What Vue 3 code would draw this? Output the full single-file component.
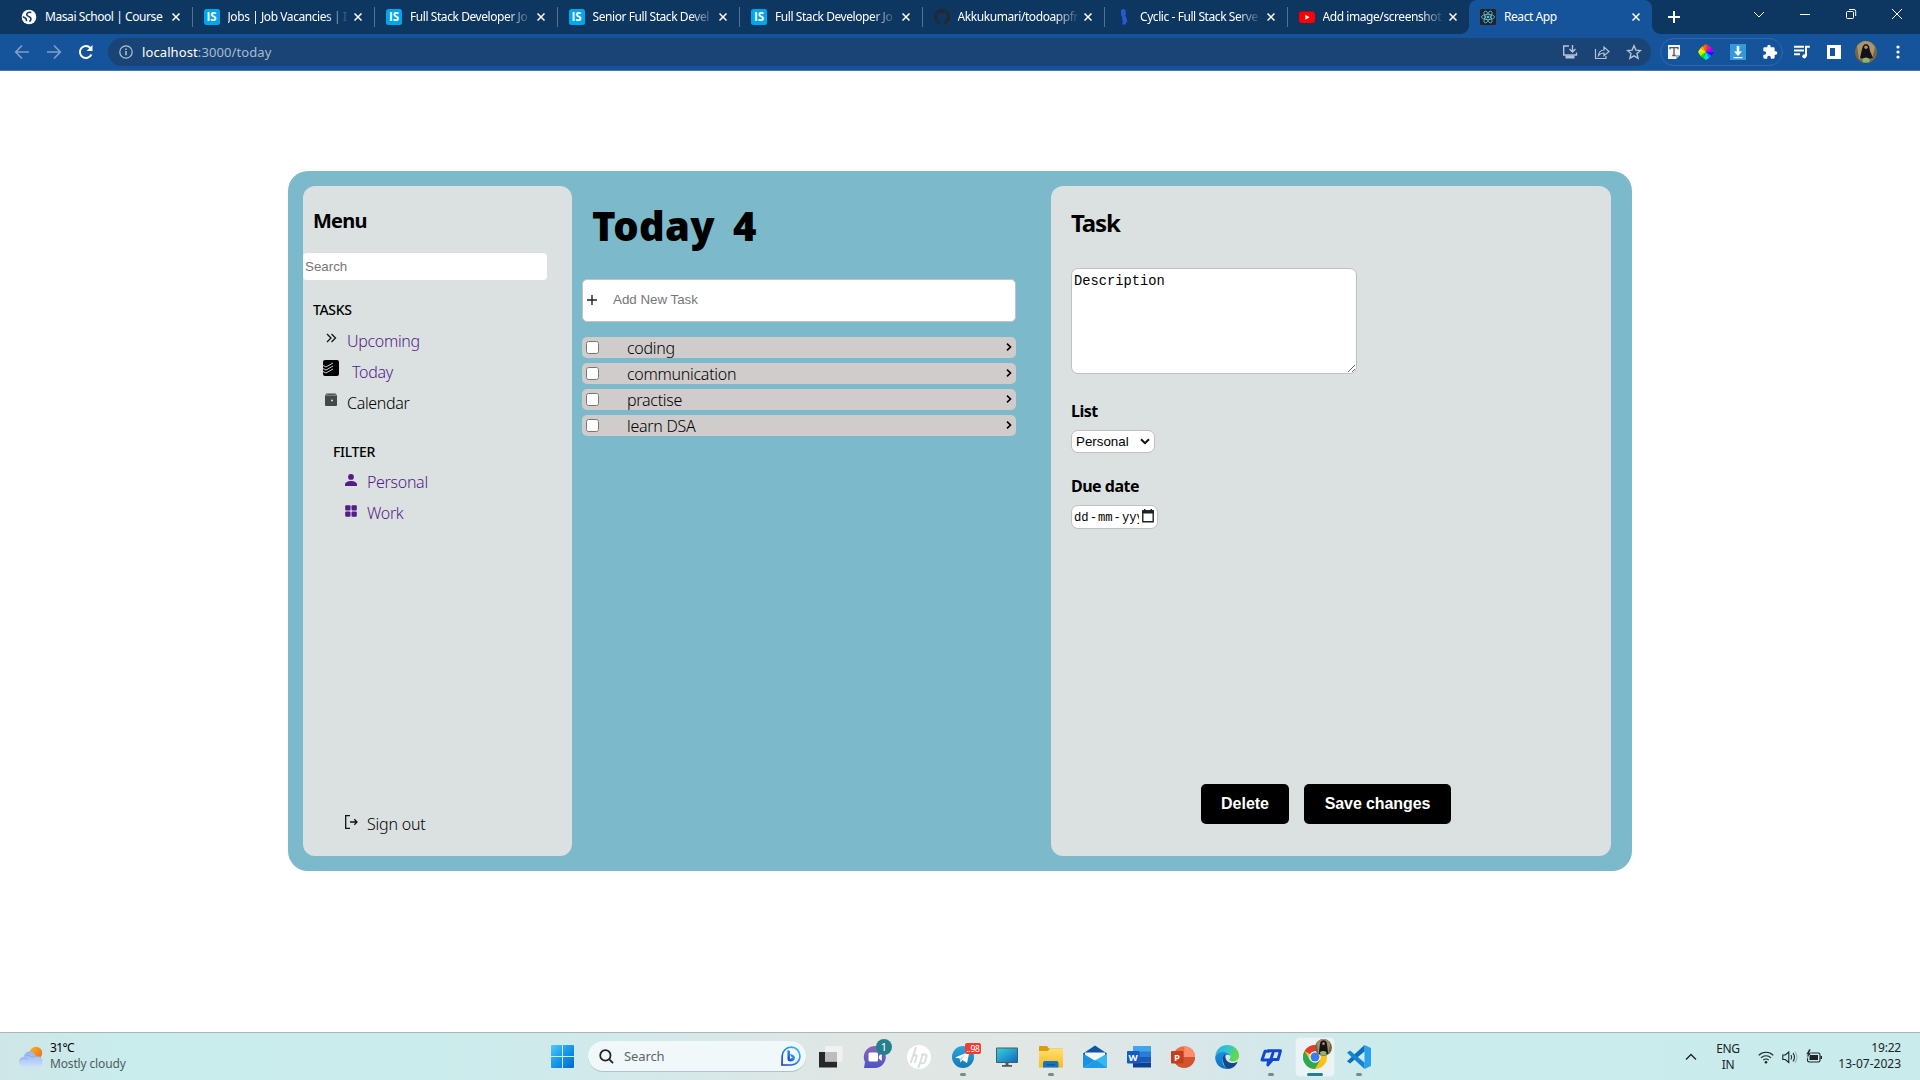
<script setup>
import { ref } from 'vue'

const tabs = [
  { icon: 'globe', title: 'Masai School | Course' },
  { icon: 'is', title: 'Jobs | Job Vacancies | I' },
  { icon: 'is', title: 'Full Stack Developer Jo' },
  { icon: 'is', title: 'Senior Full Stack Devel' },
  { icon: 'is', title: 'Full Stack Developer Jo' },
  { icon: 'github', title: 'Akkukumari/todoappfr' },
  { icon: 'cyclic', title: 'Cyclic - Full Stack Serve' },
  { icon: 'youtube', title: 'Add image/screenshot' },
  { icon: 'react', title: 'React App', active: true },
]
const tasks = ['coding', 'communication', 'practise', 'learn DSA']
const description = ref('Description')
</script>

<template>
  <div class="screen">
    <header class="tabstrip">
      <div v-for="(t, i) in tabs" :key="i" class="tab" :class="{ active: t.active, last: i === 7 }">
        <svg v-if="t.icon === 'globe'" class="fav" viewBox="0 0 16 16">
          <circle cx="8" cy="8" r="7.3" fill="#fff" />
          <path d="M10.300 3.600Q7 2.800 6 4.600T7.500 7.400L9.500 8.600Q10.700 10.500 8.500 12.600M1.800 7.600L5 9.500l.5 2.700" fill="none" stroke="#0d3661" stroke-width="1.500" />
        </svg>
        <span v-else-if="t.icon === 'is'" class="fav is">IS</span>
        <svg v-else-if="t.icon === 'github'" class="fav" viewBox="0 0 16 16">
          <path fill="#24292f" d="M8 0C3.58 0 0 3.58 0 8c0 3.54 2.29 6.53 5.47 7.59.4.07.55-.17.55-.38 0-.19-.01-.82-.01-1.49-2.01.37-2.53-.49-2.69-.94-.09-.23-.48-.94-.82-1.13-.28-.15-.68-.52-.01-.53.63-.01 1.08.58 1.23.82.72 1.21 1.87.87 2.33.66.07-.52.28-.87.51-1.07-1.78-.2-3.64-.89-3.64-3.95 0-.87.31-1.59.82-2.15-.08-.2-.36-1.02.08-2.12 0 0 .67-.21 2.2.82.64-.18 1.32-.27 2-.27s1.36.09 2 .27c1.53-1.04 2.2-.82 2.2-.82.44 1.1.16 1.92.08 2.12.51.56.82 1.27.82 2.15 0 3.07-1.87 3.75-3.65 3.95.29.25.54.73.54 1.48 0 1.07-.01 1.93-.01 2.2 0 .21.15.46.55.38A8.01 8.01 0 0 0 16 8c0-4.42-3.58-8-8-8z" />
        </svg>
        <svg v-else-if="t.icon === 'cyclic'" class="fav" viewBox="0 0 16 16">
          <path fill="#2a58cf" d="M5 1.5 6.5 0l3 .8.4 4.2-.7 1 1.2 3 1 4-1.4.5-.4 2H6.3l.6-4-.9-1 .3-2.6L5 6z" />
        </svg>
        <svg v-else-if="t.icon === 'youtube'" class="fav" viewBox="0 0 16 16">
          <rect x="0" y="2.5" width="16" height="11.5" rx="3" fill="#f00" /><path d="M6.400 5.700v5l4.200-2.500z" fill="#fff" />
        </svg>
        <svg v-else class="fav" viewBox="0 0 16 16">
          <rect width="16" height="16" rx="1.5" fill="#20232a" />
          <g fill="none" stroke="#5fc5dd" stroke-width=".8">
            <ellipse cx="8" cy="8" rx="6.6" ry="2.6" /><ellipse cx="8" cy="8" rx="6.6" ry="2.6" transform="rotate(60 8 8)" /><ellipse cx="8" cy="8" rx="6.6" ry="2.6" transform="rotate(120 8 8)" />
          </g><circle cx="8" cy="8" r="1.3" fill="#5fc5dd" />
        </svg>
        <span class="title" :class="{ faded: i > 0 && !t.active }">{{ t.title }}</span>
        <svg class="close" viewBox="0 0 8 8"><path d="M.5.5l7 7M7.5.5l-7 7" /></svg>
      </div>
      <svg class="plus" viewBox="0 0 12 12"><path d="M6 0v12M0 6h12" /></svg>
      <div class="winctl">
        <svg viewBox="0 0 12 12"><path d="M1 4l5 5 5-5" /></svg>
        <svg viewBox="0 0 12 12"><path d="M1 6.5h10" /></svg>
        <svg viewBox="0 0 12 12"><rect x="1.5" y="3.5" width="7" height="7" rx="1" /><path d="M4 1.5h5a1.700 1.700 0 0 1 1.700 1.700V8" /></svg>
        <svg viewBox="0 0 12 12"><path d="M1 1l10 10M11 1L1 11" /></svg>
      </div>
    </header>

    <div class="toolbar">
      <svg class="nav dim" viewBox="0 0 16 16"><path d="M15 8H2M8 1.500L1.700 8 8 14.500" /></svg>
      <svg class="nav dim" viewBox="0 0 16 16"><path d="M1 8h13M8 1.500L14.300 8 8 14.500" /></svg>
      <svg class="nav" viewBox="0 0 16 16"><path d="M13.400 10.500A6 6 0 1 1 12.400 4" stroke-width="2" /><path d="M14.500 1v6H8.600z" fill="#fff" stroke="none" /></svg>
      <div class="url">
        <svg class="info" viewBox="0 0 14 14"><circle cx="7" cy="7" r="6.2" /><path d="M7 6v4.200M7 3.400v1.500" stroke-width="1.5" /></svg>
        <span class="addr"><b>localhost</b>:3000/today</span>
        <svg class="uicon" viewBox="0 0 16 16"><path d="M7 2H1.700v9h12.800V8.500M10.500 1v6.500M7.500 5l3 3 3-3" stroke-width="1.400" /><path d="M3.500 11.500h9v3h-9z" fill="#b4c3d6" stroke="none" /></svg>
        <svg class="uicon" viewBox="0 0 16 16"><path d="M1.500 5v9.500h10.500V12M4.500 11.500C5 7.500 7 6 10 6V3l5 4.500-5 4.300V9C7.500 9 6 9.500 4.500 11.500z" /></svg>
        <svg class="uicon" viewBox="0 0 16 16"><path d="M8 1.800l1.900 4.300 4.600.4-3.500 3.100 1.100 4.600L8 11.800l-4.100 2.400L5 9.600 1.500 6.500l4.600-.4z" stroke-width="1.400" /></svg>
      </div>
      <div class="exts">
        <svg viewBox="0 0 16 16"><path d="M2 1h12v10l-4 4H2z" fill="#f4f4f4" /><path d="M4 5.200V3.700h8v1.500M8 3.700v7.800M6.300 11.500h3.400" stroke="#555" stroke-width="1.300" fill="none" /><path d="M14 11l-4 4v-4z" fill="#9ab0c4" /></svg>
        <svg viewBox="0 0 16 16">
          <path d="M8 8V0l3 2z" fill="#f33" /><path d="M8 8l3-6 2.500 2z" fill="#f0d" /><path d="M8 8l5.500-4L16 8z" fill="#a0f" /><path d="M8 8h8l-2.500 4z" fill="#21f" /><path d="M8 8l5.500 4L11 14z" fill="#08f" /><path d="M8 8l3 6-3 2z" fill="#0df" /><path d="M8 8v8l-3-2z" fill="#0e7" /><path d="M8 8l-3 6-2.500-2z" fill="#2d0" /><path d="M8 8l-5.500 4L0 8z" fill="#af0" /><path d="M8 8H0l2.500-4z" fill="#fe0" /><path d="M8 8L2.500 4 5 2z" fill="#fa0" /><path d="M8 8L5 2l3-2z" fill="#f60" />
        </svg>
        <svg viewBox="0 0 16 16"><path d="M0 0h16v16H0z" fill="#3498db" /><path d="M6.700 2h2.600v5.500H12L8 12 4 7.500h2.700zM3.500 13h9v1.300h-9z" fill="#fff" /></svg>
        <svg viewBox="0 0 24 24"><path fill="#fff" d="M20.500 11H19V7a2 2 0 0 0-2-2h-4V3.500a2.500 2.500 0 0 0-5 0V5H4a2 2 0 0 0-2 2v3.800h1.500a2.700 2.700 0 0 1 0 5.400H2V20a2 2 0 0 0 2 2h3.800v-1.500a2.700 2.700 0 0 1 5.400 0V22H17a2 2 0 0 0 2-2v-4h1.500a2.500 2.500 0 0 0 0-5z" /></svg>
      </div>
      <svg class="tool" viewBox="0 0 16 16"><path d="M0 2.800h10M0 6.500h10M0 10.200h6M12 12V2.700h3.800" /><circle cx="10.400" cy="12.300" r="2.100" fill="#fff" stroke="none" /></svg>
      <svg class="tool" viewBox="0 0 16 16"><path d="M1 1h14v14H1zM4 4v8h5V4z" fill="#fff" fill-rule="evenodd" stroke="none" /></svg>
      <svg class="avatar" viewBox="0 0 22 22"><circle cx="11" cy="11" r="11" fill="#776845" /><path d="M2 5q4-5 9-5t9 6l-3 12H4z" fill="#a8976c" /><path d="M8 5q3-4 6 0l1 5 3 7-7 2-6-2 2-9z" fill="#14111a" /><circle cx="11" cy="6.300" r="1.700" fill="#b98b74" /><path d="M7 18q4-3 8 0l-1 3.500H8z" fill="#8fb56b" /></svg>
      <svg class="dots" viewBox="0 0 4 16"><circle cx="2" cy="3" r="1.600" /><circle cx="2" cy="8" r="1.600" /><circle cx="2" cy="13" r="1.600" /></svg>
    </div>

    <main class="page">
      <div class="app">
        <aside class="menu">
          <h2>Menu</h2>
          <input class="search" placeholder="Search" />
          <h4>TASKS</h4>
          <a class="row visited"><svg class="ic16" viewBox="0 0 16 16"><path d="M4 4l4 4-4 4M8.500 4l4 4-4 4" fill="none" stroke="#111" stroke-width="1.300" /></svg><span>Upcoming</span></a>
          <a class="row visited wide"><svg class="ic16" viewBox="0 0 16 16"><rect width="16" height="16" rx="2" fill="#000" /><path d="M0 5.500l3 1.500 7-4M0 8.500L3 10l7-4M0 11.500L3 13l7-4" fill="none" stroke="#dbe1e0" stroke-width=".9" /></svg><span>Today</span></a>
          <a class="row"><svg class="ic16" viewBox="0 0 16 16"><path d="M3.500 1.500h9L14 3.500V13q0 1-1 1H3q-1 0-1-1V3.500z" fill="#444849" /><path d="M3 3.300h10M4 1v2M12 1v2" stroke="#8b9090" stroke-width=".9" /><circle cx="9" cy="8.500" r="1.100" fill="#cfd4d3" /></svg><span>Calendar</span></a>
          <h4 class="filter">FILTER</h4>
          <a class="row sub visited"><svg class="ic12" viewBox="0 0 12 12"><circle cx="6" cy="2.900" r="2.900" fill="#551a8b" /><path d="M0 12v-1.500C0 8.200 3 7 6 7s6 1.200 6 3.500V12z" fill="#551a8b" /></svg><span>Personal</span></a>
          <a class="row sub visited"><svg class="ic12" viewBox="0 0 12 12" fill="#551a8b"><rect x=".2" y=".2" width="5.300" height="5.300" rx="1" /><rect x="6.500" y=".2" width="5.300" height="5.300" rx="1" /><rect x=".2" y="6.500" width="5.300" height="5.300" rx="1" /><rect x="6.500" y="6.500" width="5.300" height="5.300" rx="1" /></svg><span>Work</span></a>
          <a class="row sub signout"><svg class="ic14" viewBox="0 0 13 14"><path d="M5 .6H.7v12.800H5M5 7h7M9.300 4.300L12 7 9.300 9.700" fill="none" stroke="#111" stroke-width="1.300" /></svg><span>Sign out</span></a>
        </aside>

        <section class="today">
          <h1><span>Today</span><span>4</span></h1>
          <div class="add">
            <svg viewBox="0 0 10 10"><path d="M5 0v10M0 5h10" stroke="#222" stroke-width="1.400" /></svg>
            <span>Add New Task</span>
          </div>
          <div v-for="t in tasks" :key="t" class="task">
            <input type="checkbox" />
            <span>{{ t }}</span>
            <svg viewBox="0 0 6 8"><path d="M1 .7L4.500 4 1 7.300" fill="none" stroke="#000" stroke-width="1.600" /></svg>
          </div>
        </section>

        <section class="detail">
          <h2>Task</h2>
          <textarea v-model="description" spellcheck="false"></textarea>
          <h3>List</h3>
          <div class="select">Personal<svg viewBox="0 0 10 7"><path d="M1 1.200l4 4 4-4" fill="none" stroke="#111" stroke-width="2" /></svg></div>
          <h3 class="due">Due date</h3>
          <div class="date">
            <span class="fields"><i>dd</i>-<i>mm</i>-<i>yyyy</i></span>
            <svg viewBox="0 0 12 14"><path d="M.8 2h10.400v10.800H.8z" fill="#fff" stroke="#222" stroke-width="1.400" /><path d="M.2 1.300h11.600v3.200H.2zM2 0h1.500v2H2zM8.500 0H10v2H8.500z" fill="#222" /></svg>
          </div>
          <div class="actions"><button>Delete</button><button class="save">Save changes</button></div>
        </section>
      </div>
    </main>

    <footer class="taskbar">
      <div class="weather">
        <svg viewBox="0 0 24 22">
          <defs>
            <linearGradient id="cl" x1="0" y1="0" x2="0" y2="1"><stop offset="0" stop-color="#92b3ef" /><stop offset="1" stop-color="#cfdffb" /></linearGradient>
            <linearGradient id="sn" x1="0" y1="0" x2="1" y2="1"><stop offset="0" stop-color="#f9b71d" /><stop offset="1" stop-color="#f0641c" /></linearGradient>
          </defs>
          <circle cx="17" cy="7" r="6.200" fill="url(#sn)" /><path d="M5 21a5 5 0 0 1-.5-10Q6 5.500 10.500 5.500T17 10.300q6.500-.3 6.500 5.200T18.500 21z" fill="url(#cl)" /><path d="M1 14q4-3.500 7.500-.5M6 10q4-2 7 1.500 2-2 5-1.200" fill="none" stroke="#86a5e6" stroke-width=".8" />
        </svg>
        <div><span class="temp">31°C</span><span class="cond">Mostly cloudy</span></div>
      </div>

      <svg class="start" viewBox="0 0 23 23">
        <defs><linearGradient id="wn" gradientUnits="userSpaceOnUse" x1="0" y1="0" x2="23" y2="23"><stop offset="0" stop-color="#4ecbfb" /><stop offset=".5" stop-color="#1797e8" /><stop offset="1" stop-color="#0069cf" /></linearGradient></defs>
        <path fill="url(#wn)" d="M1 0h10v11H0V1q0-1 1-1zM12 0h10q1 0 1 1v10H12zM0 12h11v11H1q-1 0-1-1zM12 12h11v10q0 1-1 1H12z" />
      </svg>
      <div class="tsearch">
        <svg class="mag" viewBox="0 0 16 16"><circle cx="6.800" cy="6.800" r="5.500" /><path d="M11 11l4 4" /></svg>
        <span>Search</span>
        <svg class="bing" viewBox="0 0 20 20">
          <defs><linearGradient id="bg" x1="0" y1="1" x2="1" y2="0"><stop offset="0" stop-color="#2336c9" /><stop offset=".5" stop-color="#2c83ea" /><stop offset="1" stop-color="#33c5f0" /></linearGradient></defs>
          <path d="M1 19l.2-9A8.900 8.900 0 1 1 10 19z" fill="#eef8fc" stroke="url(#bg)" stroke-width="1.700" /><path d="M6.500 4l2.500 1v8l2.700-1.700L10 10.500 9 8q5 1 5 3.800c0 2.200-2 3.700-4.300 3.700Q6.500 15.500 6.500 13z" fill="url(#bg)" />
        </svg>
      </div>

      <div class="apps">
        <div class="cell"><svg viewBox="0 0 24 24"><path d="M0 7h18v15.500H0z" fill="#282828" /><path d="M6 1h17.500v15.500H6z" fill="#f1f1f1" /><path d="M6 7h12v9.500H6z" fill="#bdbdbd" /></svg></div>
        <div class="cell">
          <svg viewBox="0 0 24 24"><defs><linearGradient id="tm" x1="0" y1="0" x2="0" y2="1"><stop offset="0" stop-color="#8b67b8" /><stop offset="1" stop-color="#4d53c8" /></linearGradient></defs><path d="M1 23l1-6A11 11 0 1 1 12 23z" fill="url(#tm)" /><rect x="5.500" y="7.500" width="9.500" height="9" rx="1.500" fill="#fff" /><path d="M15.800 11l3-2.500v7.500l-3-2.500z" fill="#fff" /></svg>
          <span class="badge round">1</span>
        </div>
        <div class="cell"><svg viewBox="0 0 24 24"><circle cx="12" cy="12" r="12" fill="#fff" /><path d="M9 2L3.800 18M6 11.500q3-2.500 3.800-.5L7.600 18M16 9l-4.800 14M14 9.500h4.500q1.500.3 1 2L17.800 17q-.5 1.300-2 1.300h-2.500" fill="none" stroke="#d9dfde" stroke-width="2" /></svg></div>
        <div class="cell run">
          <svg viewBox="0 0 24 24"><defs><linearGradient id="tg" x1="0" y1="0" x2="0" y2="1"><stop offset="0" stop-color="#2ba4dc" /><stop offset="1" stop-color="#1478b8" /></linearGradient></defs><circle cx="12" cy="12" r="11" fill="url(#tg)" /><path d="M4 12.500L18.500 6.500 16 18l-4.500-3-2 2.500-.8-4z" fill="#fff" /><path d="M8.700 13.500l6.500-4.500-4.500 5.500-1.200 3z" fill="#b7d8ea" /></svg>
          <span class="badge red">..98</span>
        </div>
        <div class="cell"><svg viewBox="0 0 24 24"><defs><linearGradient id="mn" x1="0" y1="0" x2="1" y2="1"><stop offset="0" stop-color="#35d2de" /><stop offset="1" stop-color="#1169bd" /></linearGradient></defs><rect x="1" y="2.500" width="22" height="15.500" rx="1" fill="#4b5a62" /><path d="M2 3.500h20v13.500H2z" fill="url(#mn)" /><path d="M10.500 18h3v2h-3zM7 20h10v1.700H7z" fill="#4b5a62" /></svg></div>
        <div class="cell run"><svg viewBox="0 0 24 24"><defs><linearGradient id="fd" x1="0" y1="0" x2="0" y2="1"><stop offset="0" stop-color="#ffdf72" /><stop offset="1" stop-color="#fcb91d" /></linearGradient></defs><path d="M0 2q0-1 1-1h7l2 2.500h13q1 0 1 1V10H0z" fill="#dc9d0c" /><path d="M0 6h9l2-2.500h12q1 0 1 1V22.500H0z" fill="url(#fd)" /><path d="M4 22.500V18q0-2 2-2h11.500q2 0 2 2v4.500z" fill="#1374c6" /><path d="M7.500 19h8.500v1.500H7.500z" fill="#0c5aa0" /></svg></div>
        <div class="cell"><svg viewBox="0 0 24 24"><path d="M0 8.500L12 .5l12 8V13H0z" fill="#0f55a5" /><path d="M2 7.500h20V16H2z" fill="#f2f6f8" /><path d="M0 8.500L24 23H1q-1 0-1-1z" fill="#1b8fe0" /><path d="M24 8.500L0 22.500q.2.500 1 .5h22q1 0 1-1z" fill="#35b7ef" /><path d="M13 15l11 8H1z" fill="#1e9ae6" /></svg></div>
        <div class="cell"><svg viewBox="0 0 24 24"><path d="M6 1h18v6H6z" fill="#41a5ee" /><path d="M6 6.500h18V12H6z" fill="#2b7cd3" /><path d="M6 12h18v5.500H6z" fill="#185abd" /><path d="M6 17.500h18v5H6z" fill="#103f91" /><rect y="6" width="12.500" height="12.500" rx="1" fill="#185abd" /></svg><span class="letter">W</span></div>
        <div class="cell"><svg viewBox="0 0 24 24"><circle cx="13.200" cy="12" r="10.800" fill="#ed6c47" /><path d="M13.200 1.200A10.800 10.800 0 0 1 24 12H13.200z" fill="#ff8f6b" /><path d="M2.400 12H24a10.800 10.800 0 0 1-21.600 0z" fill="#d35230" /><rect y="6" width="12.500" height="12.500" rx="1" fill="#c43e1c" /></svg><span class="letter">P</span></div>
        <div class="cell">
          <svg viewBox="0 0 24 24"><defs><linearGradient id="e1" x1="0" y1="0" x2="1" y2=".4"><stop offset="0" stop-color="#2ba9ea" /><stop offset=".5" stop-color="#31c5cf" /><stop offset="1" stop-color="#65da45" /></linearGradient><linearGradient id="e2" x1="0" y1="0" x2="0" y2="1"><stop offset="0" stop-color="#1a93dd" /><stop offset="1" stop-color="#0d6fc4" /></linearGradient></defs>
            <path d="M.3 10.500C1.500 4 6.500 0 12.200 0 19 0 24 4.800 24 10.500c0 4-3 6-6 6-2.700 0-4-1-3.700-2 .2-.8 1.200-1.400 1.200-3C15.500 9 12.500 7 9 7 4.500 7 1.500 9 .3 10.500z" fill="url(#e1)" /><path d="M.2 12C.4 9.500 4 6.500 8.500 6.700c4 .2 6.500 2.300 6.900 4.300-2-2-5.900-1.500-7.400 2.500-1.300 5 1.500 9 5.500 10.200C6 25 0 19.500.2 12z" fill="url(#e2)" /><path d="M7.800 14c0-3 1.700-4.500 3-5-1.500 3 .5 9 6.500 9 2.500 0 4.500-1 5.500-1.300C20.500 21.500 17 24 13 23.700 10 23 7.800 18.500 7.800 14z" fill="#114a8b" /></svg>
        </div>
        <div class="cell run"><svg viewBox="0 0 24 24"><path d="M9.500 6.200H6L3 15h8.500l2.500-7" fill="none" stroke="#1248cc" stroke-width="2.900" stroke-linejoin="round" stroke-linecap="round" /><path d="M9.500 5.800h12L19 14.500h-5.500L8.800 20l.9-4.500" fill="none" stroke="#1248cc" stroke-width="2.900" stroke-linejoin="round" stroke-linecap="round" /></svg></div>
        <div class="cell current">
          <svg viewBox="0 0 24 24"><circle cx="12" cy="12" r="12" fill="#fbc116" /><path d="M12 12L1.600 6A12 12 0 0 1 22.400 6H12z" fill="#e33b2e" /><path d="M1.600 6A12 12 0 0 0 12 24l5.200-9L12 12l-5.200 3z" fill="#2da94f" /><circle cx="12" cy="12" r="5.700" fill="#fff" /><circle cx="12" cy="12" r="4.500" fill="#3b7ded" /></svg>
          <svg class="mini" viewBox="0 0 22 22"><circle cx="11" cy="11" r="11" fill="#6f6547" /><path d="M2 5q4-5 9-5t9 6l-3 12H4z" fill="#9c8d62" /><path d="M7 4q4-5 8 0l1 6 1 9H5l1-9z" fill="#14111a" /><circle cx="11" cy="6" r="1.700" fill="#b98b74" /><path d="M6 17q5-3 9 0l-1 4H8z" fill="#8fb56b" /></svg>
        </div>
        <div class="cell run"><svg viewBox="0 0 24 24"><path d="M17.500 0L24 3v18l-6.500 3z" fill="#27a3ee" /><path d="M17.500 0v6.500L3 18.500 0 16.200z" fill="#0b6fbb" /><path d="M17.500 24v-6.500L3 5.500 0 7.800z" fill="#1485d2" /></svg></div>
      </div>

      <div class="tray">
        <svg class="up" viewBox="0 0 12 8"><path d="M1 6.500l5-5 5 5" /></svg>
        <div class="lang"><span>ENG</span><span>IN</span></div>
        <svg class="sys" viewBox="0 0 16 16"><path d="M.7 6.300a10.300 10.300 0 0 1 14.600 0M3 8.800a7 7 0 0 1 10 0M5.300 11.200a3.800 3.800 0 0 1 5.400 0" /><circle cx="8" cy="13.300" r="1.300" fill="#1b2426" stroke="none" /></svg>
        <svg class="sys" viewBox="0 0 16 16"><path d="M.8 6v4.500h2.500L6.800 13.500V3L3.300 6zM9 6q1.500 2.200 0 4.500M11 4q3 4.200 0 8.500" /><path d="M13 2.500q4 5.700 0 11.500" stroke="#9db4b6" /></svg>
        <svg class="sys" viewBox="0 0 16 16"><rect x="1.500" y="4" width="12.500" height="9" rx="1.700" /><path d="M3.500 6H12v5H3.500zM14.500 7H16v3h-1.500z" fill="#1b2426" stroke="none" /><path d="M3 0L0 5.500h2L1 9.500l4.500-5.500H3.500L5 0z" fill="#1b2426" stroke="#cbecec" stroke-width=".6" /></svg>
        <div class="clock"><span class="time">19:22</span><span>13-07-2023</span></div>
      </div>
    </footer>
  </div>
</template>

<style>
body { margin: 0; overflow: hidden; }
</style>

<style scoped>
* { box-sizing: border-box; }
.screen { width: 1920px; height: 1080px; display: flex; flex-direction: column; background: #fff; font-family: "Noto Sans", "Open Sans", sans-serif; color: #000; }
h1, h2, h3, h4 { margin: 0; }
svg { display: block; flex: none; }

.tabstrip { height: 34px; background: #0d3661; display: flex; align-items: center; padding-left: 9px; flex: none; }
.tab { position: relative; width: 182.5px; height: 34px; padding: 0 11px 0 12px; display: flex; align-items: center; color: #fff; flex: none; }
.tab:not(.active):not(.last)::after { content: ""; position: absolute; right: -1px; top: 7px; width: 1px; height: 20px; background: #55728f; }
.tab.active { padding-left: 11px; background: #15539b; border-radius: 8px 8px 0 0; }
.tab.active::before, .tab.active::after { content: ""; position: absolute; bottom: 0; width: 8px; height: 8px; }
.tab.active::before { left: -8px; background: radial-gradient(circle at 0 0, transparent 7.5px, #15539b 8px); }
.tab.active::after { right: -8px; background: radial-gradient(circle at 100% 0, transparent 7.5px, #15539b 8px); }
.fav { width: 16px; height: 16px; flex: none; }
.fav.is { background: #00a5ec; border-radius: 2.5px; font: bold 11.5px/16px "Open Sans", sans-serif; text-align: center; }
.title { width: 124px; margin-left: 8px; font-size: 12px; line-height: 18px; letter-spacing: -0.43px; white-space: nowrap; }
.title.faded { -webkit-mask-image: linear-gradient(90deg, #000 97px, transparent 122px); mask-image: linear-gradient(90deg, #000 97px, transparent 122px); }
.close { width: 8px; height: 8px; margin-left: auto; margin-right: 1px; stroke: #fff; stroke-width: 1.5; }
.plus { width: 12px; height: 12px; margin-left: 16px; stroke: #fff; stroke-width: 2; }
.winctl { margin-left: auto; margin-right: 17px; margin-bottom: 6px; display: flex; gap: 34px; }
.winctl svg { width: 12px; height: 12px; fill: none; stroke: #fff; stroke-width: 1; }

.toolbar { height: 37px; background: #15539b; border-bottom: 1px solid #4577b4; display: flex; align-items: center; padding-left: 14px; flex: none; }
.nav { width: 16px; height: 16px; margin-right: 16px; fill: none; stroke: #fff; stroke-width: 1.7; }
.nav.dim { stroke: #7d9fc8; }
.url { width: 1543px; height: 28px; margin-left: -2px; border-radius: 14px; background: #1a4475; display: flex; align-items: center; padding: 0 9px 0 11px; gap: 16px; }
.info { width: 14px; height: 14px; fill: none; stroke: #b4c3d6; stroke-width: 1.2; }
.addr { margin-left: -7px; margin-right: auto; font-size: 13px; line-height: 20px; color: #a9bcd3; letter-spacing: 0.1px; }
.addr b { font-weight: 400; color: #fff; }
.uicon { width: 16px; height: 16px; fill: none; stroke: #b4c3d6; stroke-width: 1.2; }
.exts { width: 123px; height: 28px; margin-left: 9px; border: 1px solid #3069ab; border-radius: 14px; display: flex; align-items: center; padding-left: 5px; gap: 16px; }
.exts svg { width: 16px; height: 16px; }
.tool { width: 16px; height: 16px; margin-left: 16px; fill: none; stroke: #fff; stroke-width: 2; }
.exts + .tool { margin-left: 11px; }
.avatar { width: 22px; height: 22px; margin-left: 13px; }
.dots { width: 4px; height: 16px; margin-left: 19px; fill: #fff; }

.page { height: 961px; padding: 100px 288px 0; flex: none; }
.app { width: 1344px; height: 700px; padding: 15px 21px 15px 15px; border-radius: 20px; background: #7cb9cb; display: flex; }
.menu { width: 269px; height: 670px; border-radius: 12px; background: #dbe1e0; display: flex; flex-direction: column; padding: 21px 0 17px; }
.menu h2 { padding-left: 10px; font-size: 20px; line-height: 27px; letter-spacing: -0.8px; }
.search { width: 244px; height: 27px; margin-top: 19px; border: 0; border-radius: 4px; padding: 0 2px; background: #fff; font: 13.33px "Liberation Sans", Arial, sans-serif; }
.search::placeholder { color: #757575; }
.menu h4 { margin: 20px 0 6px; padding-left: 10px; font-size: 14px; line-height: 19px; font-weight: 500; letter-spacing: -0.35px; }
.menu h4.filter { margin: 24px 0 5px; padding-left: 30px; }
.row { height: 31px; padding-left: 20px; display: flex; gap: 8px; line-height: 31px; font-size: 16px; font-weight: 350; letter-spacing: -0.32px; }
.row span { padding-top: 1px; }
.row.visited { color: #551a8b; }
.row.wide { gap: 13px; }
.row.sub { padding-left: 42px; gap: 10px; }
.row.signout { margin-top: auto; letter-spacing: -0.2px; }
.ic16 { width: 16px; height: 16px; margin-top: 5px; }
.wide .ic16 { margin-top: 4px; }
.ic12 { width: 12px; height: 12px; margin-top: 8px; }
.ic14 { width: 13px; height: 14px; margin-top: 7px; margin-right: -1px; }

.today { width: 434px; margin: 0 35px 0 10px; display: flex; flex-direction: column; }
h1 { margin-top: 13px; padding-left: 10px; font-size: 40px; line-height: 54px; font-weight: 900; display: flex; gap: 18px; letter-spacing: 0.3px; }
.add { height: 43px; margin: 26px 0 15px; padding-left: 4px; border: 1px solid #c6c2c2; border-radius: 5px; background: #fff; display: flex; align-items: center; font: 13.33px "Liberation Sans", Arial, sans-serif; color: #757575; padding-bottom: 2px; gap: 16px; }
.add svg { width: 10px; height: 10px; }
.task { height: 21px; margin-bottom: 5px; padding: 0 4px 0 4px; border-radius: 5px; background: #d0cccb; display: flex; align-items: center; font-size: 16px; font-weight: 350; letter-spacing: -0.28px; line-height: 22px; }
.task input { width: 13px; height: 13px; margin: 0 28px 0 0; }
.task span { padding-top: 0; margin-right: auto; }
.task svg { width: 6px; height: 8px; margin-bottom: 1px; }

.detail { width: 560px; height: 670px; padding: 21px 20px 32px; border-radius: 12px; background: #dbe1e0; display: flex; flex-direction: column; align-items: flex-start; }
.detail h2 { font-size: 24px; line-height: 32px; letter-spacing: -1.1px; }
textarea { width: 286px; height: 106px; margin: 29px 0 26px; padding: 3px 2px 2px; border: 1px solid #c2c0c0; border-radius: 7px; background: #fff; font: 13.75px/19px "Liberation Mono", monospace; color: #000; outline: none; }
.detail h3 { font-size: 16px; line-height: 22px; letter-spacing: -0.5px; }
.select { width: 84px; height: 23px; margin: 8px 0 22px; padding: 0 4px; border: 1px solid #c2c0c0; border-radius: 7px; background: #fff; display: flex; align-items: center; justify-content: space-between; font: 13.33px "Liberation Sans", Arial, sans-serif; }
.select svg { width: 10px; height: 7px; }
.date { width: 87px; height: 24px; margin-top: 8px; padding: 2px 3px 0 1px; border: 1px solid #c2c0c0; border-radius: 7px; background: #fff; display: flex; align-items: center; font: 12.2px "Liberation Mono", monospace; }
.fields { width: 67px; overflow: hidden; white-space: nowrap; }
.fields i { font-style: normal; padding: 0 1px; }
.date svg { width: 12px; height: 14px; margin: -4px 0 0 3px; }
.actions { margin: auto 0 0 130px; display: flex; gap: 15px; }
.actions button { width: 88px; height: 40px; padding: 0; border: 0; border-radius: 5px; background: #000; color: #fff; font: bold 16px "Liberation Sans", Arial, sans-serif; }
.actions button.save { width: 147px; letter-spacing: -0.1px; }

.taskbar { height: 48px; border-top: 1px solid #a9b7bb; display: flex; align-items: center; flex: none; font-size: 12px; background: linear-gradient(90deg, #cfe6e8 0, #c9ecec 120px, #caecec 420px, #d2e9eb 600px, #e0e6e4 860px, #e1e7e5 1060px, #d6e7ea 1230px, #cbecec 1400px, #c9ebec 100%); }
.weather { width: 551px; padding-left: 19px; display: flex; align-items: center; gap: 7px; }
.weather svg { width: 24px; height: 22px; }
.weather div, .lang, .clock { display: flex; flex-direction: column; line-height: 16px; margin-top: -1px; }
.temp { letter-spacing: -0.6px; }
.cond { color: #4c5d5f; letter-spacing: -0.15px; }
.start { width: 23px; height: 23px; }
.tsearch { width: 218px; height: 31px; margin: 0 3px 0 14px; padding: 0 5px 0 11px; border-radius: 16px; background: #f0f8f9; border-bottom: 1px solid #adc4c8; display: flex; align-items: center; font-size: 13px; color: #5c6668; }
.tsearch span { margin: 0 auto 0 10px; letter-spacing: -0.1px; }
.mag { width: 15px; height: 15px; fill: none; stroke: #222; stroke-width: 1.9; }
.bing { width: 20px; height: 20px; }
.apps { display: flex; }
.cell { position: relative; width: 38px; height: 38px; margin-right: 6px; display: flex; align-items: center; justify-content: center; border-radius: 4px; }
.cell:first-child { margin-left: 3px; }
.cell > svg { width: 24px; height: 24px; }
.cell.current { background: #eaf4f6; box-shadow: 0 0 0 1px #dfeaec; }
.cell.run::after, .cell.current::after { content: ""; position: absolute; bottom: 0; left: 16px; width: 6px; height: 3px; border-radius: 2px; background: #7b8889; }
.cell.current::after { left: 11px; width: 16px; background: #227f92; }
.badge { position: absolute; color: #fff; text-align: center; }
.badge.round { left: 20px; top: 1px; width: 16px; height: 16px; border-radius: 50%; background: #24808c; font-size: 11px; line-height: 16px; }
.badge.red { left: 21px; top: 5px; width: 16px; height: 11px; border-radius: 2px; background: #f23c34; font-size: 8.5px; line-height: 11px; letter-spacing: -0.2px; }
.letter { position: absolute; left: 7px; top: 13px; width: 12px; font: bold 9.5px/13px "Open Sans", sans-serif; color: #fff; text-align: center; }
.cell > .mini { position: absolute; right: 2px; top: 1px; width: 17px; height: 17px; }
.tray { margin-left: auto; padding-right: 19px; display: flex; align-items: center; color: #1b2426; }
.up { width: 12px; height: 8px; margin-right: -1px; fill: none; stroke: #1b2426; stroke-width: 1.4; }
.tray .lang { width: 24px; margin: 0 18px 0 20px; align-items: center; letter-spacing: -0.4px; }
.sys { width: 16px; height: 16px; margin-right: 8px; fill: none; stroke: #1b2426; stroke-width: 1.1; }
.clock { width: 71px; align-items: flex-end; letter-spacing: 0; }
.time { letter-spacing: -0.2px; }
</style>
